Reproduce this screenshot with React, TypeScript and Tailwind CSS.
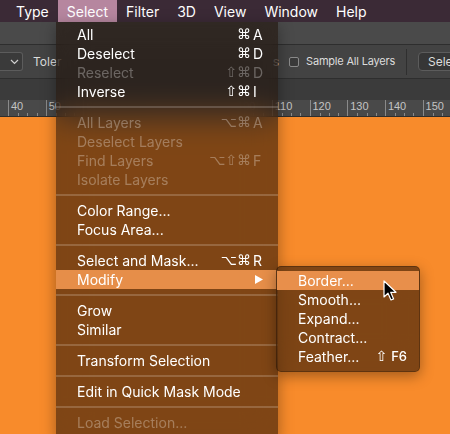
import React from 'react';

type Item = {
  label: string;
  mods?: string;
  k?: string;
  dis?: boolean;
  hi?: boolean;
  arrow?: boolean;
} | null;

const mainItems: Item[] = [
  { label: 'All', mods: '⌘', k: 'A' },
  { label: 'Deselect', mods: '⌘', k: 'D' },
  { label: 'Reselect', mods: '⇧⌘', k: 'D', dis: true },
  { label: 'Inverse', mods: '⇧⌘', k: 'I' },
  null,
  { label: 'All Layers', mods: '⌥⌘', k: 'A', dis: true },
  { label: 'Deselect Layers', dis: true },
  { label: 'Find Layers', mods: '⌥⇧⌘', k: 'F', dis: true },
  { label: 'Isolate Layers', dis: true },
  null,
  { label: 'Color Range...' },
  { label: 'Focus Area...' },
  null,
  { label: 'Select and Mask...', mods: '⌥⌘', k: 'R' },
  { label: 'Modify', hi: true, arrow: true },
  null,
  { label: 'Grow' },
  { label: 'Similar' },
  null,
  { label: 'Transform Selection' },
  null,
  { label: 'Edit in Quick Mask Mode' },
  null,
  { label: 'Load Selection...', dis: true },
];

const subItems: Item[] = [
  { label: 'Border...', hi: true },
  { label: 'Smooth...' },
  { label: 'Expand...' },
  { label: 'Contract...' },
  { label: 'Feather...', mods: '⇧', k: 'F6' },
];

function Sep() {
  return (
    <div className="h-[12px] flex flex-col justify-center">
      <div className="h-[2px] bg-white/[0.18]" />
    </div>
  );
}

function MainRow({ r }: { r: NonNullable<Item> }) {
  return (
    <div
      className={`h-[19px] flex items-center pl-[21px] pr-[13px] ${r.hi ? 'bg-[#e68e49]' : ''} ${
        r.dis ? 'text-white/30' : 'text-white'
      }`}
    >
      <span className="flex-1 whitespace-nowrap">{r.label}</span>
      {r.k && (
        <span className="flex items-center">
          <span className="font-['DejaVu_Sans',sans-serif] text-[14px] leading-[19px]">{r.mods}</span>
          <span className="w-[14px] pl-[2px]">{r.k}</span>
        </span>
      )}
      {r.arrow && (
        <svg width="8" height="9" viewBox="0 0 8 9" className="mr-[2px]">
          <polygon points="0,0 8,4.5 0,9" fill="white" />
        </svg>
      )}
    </div>
  );
}

function SubRow({ r }: { r: NonNullable<Item> }) {
  return (
    <div
      className={`h-[19px] flex items-center pl-[21px] pr-[12px] text-white ${r.hi ? 'bg-[#e88f4b]' : ''}`}
    >
      <span className="flex-1 whitespace-nowrap">{r.label}</span>
      {r.k && (
        <span className="flex items-center gap-[4px]">
          <span className="font-['DejaVu_Sans',sans-serif] text-[14px] leading-[19px]">{r.mods}</span>
          <span className="text-[13px] font-medium">{r.k}</span>
        </span>
      )}
    </div>
  );
}

const rulerLabels = [40, 50, 60, 70, 80, 90, 100, 110, 120, 130, 140, 150];

export default function App() {
  return (
    <div className="relative w-[450px] h-[434px] overflow-hidden flex flex-col bg-[#f88b2b] font-['Inter','DejaVu_Sans',sans-serif]">
      {/* Menu bar */}
      <div className="h-[22px] shrink-0 flex items-stretch pl-[7px] bg-[#3b2a36] text-white text-[14px]">
        {['Type', 'Select', 'Filter', '3D', 'View', 'Window', 'Help'].map((m) => (
          <div
            key={m}
            className={`px-[9px] flex items-center ${m === 'Select' ? 'bg-[#b6869f]' : ''}`}
          >
            {m}
          </div>
        ))}
      </div>

      {/* Top panel row */}
      <div className="h-[23px] shrink-0 bg-[#4a4a4a] border-b border-[#2e2e2e]" />

      {/* Options bar */}
      <div className="h-[34px] shrink-0 w-[490px] flex items-center bg-[#434343] border-b border-[#2e2e2e] text-[12px] text-[#dcdcdc]">
        <div className="w-[23px] h-[19px] shrink-0 flex items-center justify-end pr-[3px] bg-[#3a3a3a] border border-l-0 border-[#5c5c5c] rounded-r-[3px]">
          <svg width="9" height="6" viewBox="0 0 9 6">
            <polyline points="1,1 4.5,4.5 8,1" fill="none" stroke="#cfcfcf" strokeWidth="1.2" />
          </svg>
        </div>
        <span className="ml-[10px] whitespace-nowrap">Toler</span>
        <div className="flex-1" />
        <span className="whitespace-nowrap">s</span>
        <div className="ml-[10px] w-[10px] h-[10px] shrink-0 rounded-[2px] border border-[#8a8a8a] bg-[#3a3a3a]" />
        <span className="ml-[7px] whitespace-nowrap text-[11px] tracking-[-0.2px]">Sample All Layers</span>
        <div className="ml-[11px] w-px h-[26px] bg-[#2f2f2f]" />
        <div className="ml-[11px] w-[72px] h-[19px] shrink-0 flex items-center pl-[9px] bg-[#363636] border border-[#5c5c5c] rounded-[4px] whitespace-nowrap overflow-hidden">
          Sele
        </div>
      </div>

      {/* Tab row */}
      <div className="h-[21px] shrink-0 bg-[#3b3b3b]" />

      {/* Ruler */}
      <div className="h-[17px] shrink-0 flex bg-[#494949] border-b border-[#2e2e2e] pl-[8px] overflow-hidden text-[11px] text-[#c4c4c4]">
        {rulerLabels.map((n) => (
          <div key={n} className="w-[37.7px] shrink-0 relative border-l border-[#8a8a8a] flex flex-col">
            <span className="pl-[2px] leading-[13px] font-['Liberation_Sans',sans-serif]">{n}</span>
            <div className="flex-1 flex">
              {[0, 1, 2, 3].map((i) => (
                <div key={i} className="flex-1 flex items-end">
                  {i > 0 && <div className="w-px h-[3px] bg-[#8a8a8a]" />}
                </div>
              ))}
            </div>
          </div>
        ))}
      </div>

      {/* Canvas */}
      <div className="flex-1 bg-[#f88b2b]" />

      {/* Main dropdown menu */}
      <div className="absolute left-[56px] top-[22px] w-[222px] pt-[3px] pb-[6px] text-[14px] bg-[rgba(27,12,4,0.55)] backdrop-blur-lg shadow-[0_4px_14px_rgba(0,0,0,0.35)]">
        {mainItems.map((r, i) => (r ? <MainRow key={i} r={r} /> : <Sep key={i} />))}
      </div>

      {/* Submenu */}
      <div className="absolute left-[276px] top-[266px] w-[144px] pt-[4px] pb-[5px] text-[14px] rounded-[5px] overflow-hidden bg-[rgba(27,12,4,0.55)] backdrop-blur-lg border border-black/25 shadow-[0_4px_14px_rgba(0,0,0,0.35)]">
        {subItems.map((r, i) => (r ? <SubRow key={i} r={r} /> : <Sep key={i} />))}
      </div>

      {/* Cursor */}
      <svg
        className="absolute left-[383px] top-[280px]"
        width="14"
        height="22"
        viewBox="0 0 14 22"
      >
        <path
          d="M1 1 L1 17 L5 13.2 L8 20 L10.6 18.9 L7.7 12.3 L13 12.3 Z"
          fill="black"
          stroke="white"
          strokeWidth="1.2"
          strokeLinejoin="round"
        />
      </svg>
    </div>
  );
}
